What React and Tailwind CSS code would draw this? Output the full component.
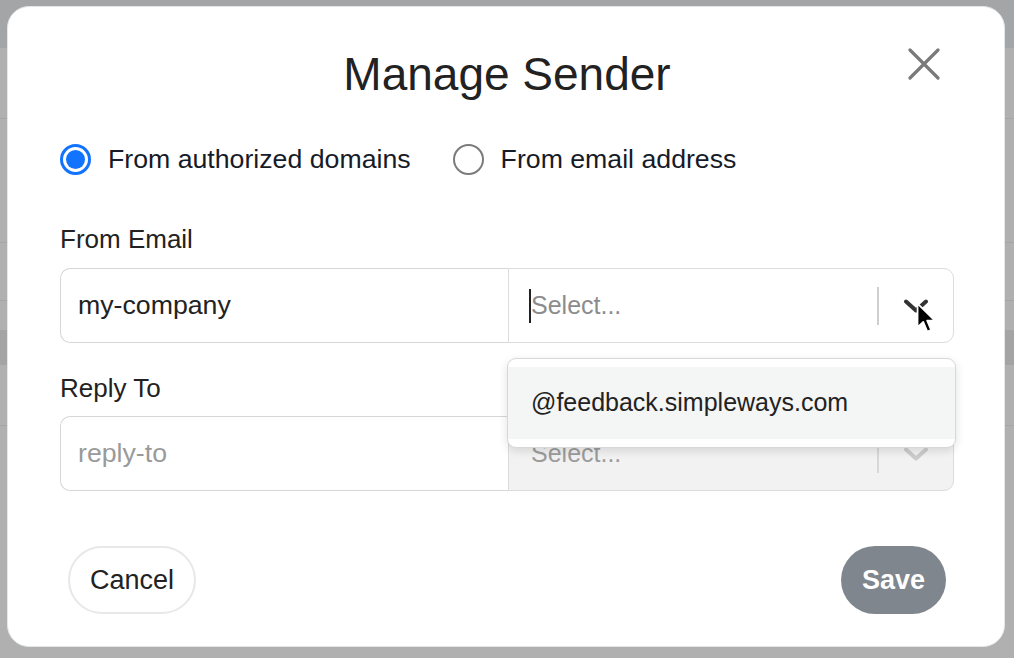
import React from "react";

const font = { fontFamily: '"Liberation Sans", Arial, sans-serif' };

function Chevron({ color }) {
    return (
        <svg width="26" height="14" viewBox="0 0 26 14" fill="none">
            <path d="M3 2.5 L13 11.5 L23 2.5" stroke={color} strokeWidth="4" strokeLinecap="round" strokeLinejoin="round" />
        </svg>
    );
}

function Cursor() {
    return (
        <svg width="22" height="33" viewBox="0 0 14 21" className="absolute left-[916px] top-[302px]">
            <path d="M1 1 L1 16 L4.6 12.6 L7.2 18.8 L9.6 17.8 L7.1 11.8 L12 11.8 Z" fill="#000" stroke="#fff" strokeWidth="1.1" strokeLinejoin="round" />
        </svg>
    );
}

function Radio({ checked, label }) {
    return (
        <label className="flex items-center gap-[17px]">
            {checked ? (
                <span className="flex h-[31px] w-[31px] items-center justify-center rounded-full border-[3px] border-[#1273ff]">
                    <span className="h-[19px] w-[19px] rounded-full bg-[#1273ff]" />
                </span>
            ) : (
                <span className="h-[31px] w-[31px] rounded-full border-2 border-[#7b7b7b]" />
            )}
            <span className="text-[26.7px] leading-none text-[#171b27]">{label}</span>
        </label>
    );
}

export default function App() {
    return (
        <div className="relative h-[658px] w-[1014px] overflow-hidden bg-[#b0b0b0]" style={font}>
            {/* page behind the overlay */}
            <div className="flex flex-col">
                <div className="h-[48px] bg-[#a4a5a7]" />
                <div className="h-[70px]" />
                <div className="h-px bg-[#a5a5a5]" />
                <div className="h-[123px]" />
                <div className="h-px bg-[#a5a5a5]" />
                <div className="h-[57px]" />
                <div className="h-px bg-[#a5a5a5]" />
                <div className="h-[29px]" />
                <div className="h-[35px] bg-[#a4a4a4]" />
                <div className="h-[60px]" />
                <div className="h-px bg-[#a5a5a5]" />
            </div>

            {/* modal */}
            <div className="absolute left-[7px] top-[6px] h-[641px] w-[998px] rounded-[22px] border border-[#e3e7e9] bg-white">
                <button className="absolute right-[64px] top-[41px] text-[#7a7a7a]">
                    <svg width="32" height="32" viewBox="0 0 32 32">
                        <path d="M2 2 L30 30 M30 2 L2 30" stroke="currentColor" strokeWidth="3.2" strokeLinecap="round" />
                    </svg>
                </button>

                <div className="flex flex-col pl-[52px] pr-[50px] pt-[41px]">
                    <h1 className="text-center text-[46px] leading-[52px] text-[#222]">Manage Sender</h1>

                    <div className="mt-[44px] flex items-center gap-[42px]">
                        <Radio checked label="From authorized domains" />
                        <Radio label="From email address" />
                    </div>

                    <div className="mt-[49px] text-[26px] leading-[30px] text-[#222]">From Email</div>
                    <div className="mt-[14px] flex h-[75px]">
                        <div className="flex w-[448px] items-center rounded-l-[10px] border border-r-0 border-[#d6d6d6] pl-[17px] text-[26.7px] text-[#222]">
                            my-company
                        </div>
                        <div className="relative flex flex-1 items-center rounded-r-[10px] border border-[#dcdcdc]">
                            <span className="ml-[20px] h-[34px] w-[2px] bg-[#222]" />
                            <span className="flex-1 text-[25px] text-[#8c8c8c]">Select...</span>
                            <span className="h-[38px] w-[2px] bg-[#cfcfcf]" />
                            <span className="flex w-[74px] justify-center">
                                <Chevron color="#333" />
                            </span>
                            <div className="absolute left-[-2px] right-[-3px] top-[89px] z-10 rounded-[9px] border border-[#d8d8d8] bg-white py-[8px] shadow-[0_3px_10px_rgba(0,0,0,0.12)]">
                                <div className="flex h-[72px] items-center bg-[#f4f5f5] pl-[23px] text-[25px] text-[#222]">
                                    @feedback.simpleways.com
                                </div>
                            </div>
                        </div>
                    </div>

                    <div className="mt-[30px] text-[26px] leading-[30px] text-[#222]">Reply To</div>
                    <div className="mt-[13px] flex h-[75px]">
                        <div className="flex w-[448px] items-center rounded-l-[10px] border border-r-0 border-[#d6d6d6] pl-[17px] text-[26.7px] text-[#9a9a9a]">
                            reply-to
                        </div>
                        <div className="flex flex-1 items-center rounded-r-[10px] border border-[#dcdcdc] bg-[#f2f2f2]">
                            <span className="ml-[22px] flex-1 text-[25px] text-[#9c9c9c]">Select...</span>
                            <span className="h-[38px] w-[2px] bg-[#d8d8d8]" />
                            <span className="flex w-[74px] justify-center">
                                <Chevron color="#cccccc" />
                            </span>
                        </div>
                    </div>

                    <div className="mt-[55px] flex items-center justify-between px-[8px]">
                        <button className="h-[68px] rounded-full border-2 border-[#e8e8e8] px-[20px] text-[27px] text-[#222]">Cancel</button>
                        <button className="h-[68px] rounded-full bg-[#80868d] px-[21px] text-[27px] font-bold text-white">Save</button>
                    </div>
                </div>
            </div>

            <Cursor />
        </div>
    );
}
